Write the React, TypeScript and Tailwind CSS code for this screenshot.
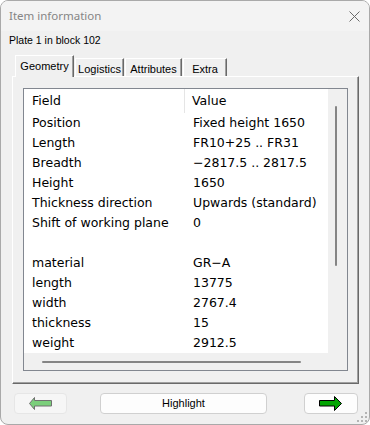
import type { ReactNode } from "react";

const rows: [string, string][] = [
  ["Position", "Fixed height 1650"],
  ["Length", "FR10+25 .. FR31"],
  ["Breadth", "\u22122817.5 .. 2817.5"],
  ["Height", "1650"],
  ["Thickness direction", "Upwards (standard)"],
  ["Shift of working plane", "0"],
  ["", ""],
  ["material", "GR\u2212A"],
  ["length", "13775"],
  ["width", "2767.4"],
  ["thickness", "15"],
  ["weight", "2912.5"],
];

function Tab({ label, width, active }: { label: string; width: string; active?: boolean }) {
  if (active) {
    return (
      <div
        className={`${width} relative z-10 -mb-[1px] flex h-[22px] items-start justify-center border-l border-t border-white bg-[#f0f0f0] pt-[2px] shadow-[inset_-1px_0_0_#a0a0a0] border-r border-r-[#696969]`}
      >
        {label}
      </div>
    );
  }
  return (
    <div
      className={`${width} flex h-[18px] items-start justify-center border-l border-t border-white pt-[2px] shadow-[inset_-1px_0_0_#a0a0a0] border-r border-r-[#696969]`}
    >
      {label}
    </div>
  );
}

function Button({ className, disabled, children }: { className: string; disabled?: boolean; children: ReactNode }) {
  return (
    <button
      className={`${className} flex h-[21px] items-center justify-center rounded-[4px] border ${
        disabled ? "border-[#e6e6e6] bg-[#f6f6f6]" : "border-[#d0d0d0] bg-[#fdfdfd]"
      }`}
    >
      {children}
    </button>
  );
}

export default function App() {
  return (
    <div className="h-[425px] w-[370px] bg-white font-['Liberation_Sans',sans-serif] text-black">
      <div className="relative flex h-full flex-col overflow-hidden rounded-[8px] border border-[#a9a9a9] bg-[#f0f0f0]">
        {/* Title bar */}
        <div className="flex h-[30px] shrink-0 items-center justify-between bg-[#f3f3f3] pl-[8px] pr-[9px]">
          <span className="font-['Noto_Sans',sans-serif] text-[11.5px] text-[#858585]">Item information</span>
          <svg width="11" height="11" viewBox="0 0 11 11" className="mt-[1px]">
            <path d="M0.5 0.5 L10.5 10.5 M10.5 0.5 L0.5 10.5" stroke="#6a6a6a" strokeWidth="1" />
          </svg>
        </div>

        {/* Subtitle */}
        <div className="flex h-[20px] shrink-0 items-center pl-[8px] text-[10.5px]">Plate 1 in block 102</div>

        {/* Tabs */}
        <div className="mt-[4px] pl-[11px] pr-[10px]">
          <div className="flex items-end gap-[1px] pl-[3px] text-[11px]">
            <Tab label="Geometry" width="w-[59px]" active />
            <Tab label="Logistics" width="w-[49px]" />
            <Tab label="Attributes" width="w-[57px]" />
            <Tab label="Extra" width="w-[44px]" />
          </div>

          <div className="h-[308px] border-l border-t border-white border-r border-b border-r-[#696969] border-b-[#696969] px-[10px] pb-[12px] pt-[11px] shadow-[inset_-1px_-1px_0_#a0a0a0]">
            {/* List box */}
            <div className="flex h-[283px] flex-col border border-[#828790] bg-[#f0f0f0]">
              <div className="flex h-[264px]">
                <div className="w-[304px] bg-white font-['DejaVu_Sans',sans-serif] text-[12.5px]">
                  <div className="flex h-[24px] items-center">
                    <div className="flex h-full w-[161px] items-center border-r border-[#e5e5e5] pl-[8px]">Field</div>
                    <div className="pl-[7px]">Value</div>
                  </div>
                  {rows.map(([field, value], i) => (
                    <div key={i} className="flex h-[20px] items-center whitespace-nowrap">
                      <div className="w-[161px] pl-[8px]">{field}</div>
                      <div className="pl-[8px]">{value}</div>
                    </div>
                  ))}
                </div>
                {/* vertical scrollbar */}
                <div className="w-[17px] pl-[7px] pt-[17px]">
                  <div className="h-[160px] w-[2px] rounded-full bg-[#858585]" />
                </div>
              </div>
              {/* horizontal scrollbar */}
              <div className="h-[17px] pl-[18px] pt-[8px]">
                <div className="h-[2px] w-[259px] rounded-full bg-[#858585]" />
              </div>
            </div>
          </div>
        </div>

        {/* Buttons */}
        <div className="mt-[9px] flex pl-[13px] text-[11px]">
          <Button className="w-[53px]" disabled>
            <svg width="23" height="13" viewBox="0 0 23 13">
              <polygon
                points="22.5,3.5 5.5,3.5 5.5,0.5 0.5,6.5 5.5,12.5 5.5,9 22.5,9"
                fill="#7bcf7b"
                stroke="#707070"
                strokeWidth="1"
              />
            </svg>
          </Button>
          <Button className="ml-[33px] w-[167px]">Highlight</Button>
          <Button className="ml-[37px] w-[54px]">
            <svg width="24" height="15" viewBox="0 0 24 15">
              <polygon
                points="0.5,4.5 15.5,4.5 15.5,0.5 22.5,7.5 15.5,14.5 15.5,10 0.5,10"
                fill="#00a400"
                stroke="#000"
                strokeWidth="1"
              />
            </svg>
          </Button>
        </div>

        {/* Resize grip */}
        <svg width="10" height="10" viewBox="0 0 10 10" className="absolute bottom-[2px] right-[2px]">
          <rect x="8" y="0" width="2" height="2" fill="#b4b4b4" />
          <rect x="4" y="4" width="2" height="2" fill="#b4b4b4" />
          <rect x="8" y="4" width="2" height="2" fill="#b4b4b4" />
          <rect x="0" y="8" width="2" height="2" fill="#b4b4b4" />
          <rect x="4" y="8" width="2" height="2" fill="#b4b4b4" />
          <rect x="8" y="8" width="2" height="2" fill="#b4b4b4" />
        </svg>
      </div>
    </div>
  );
}
